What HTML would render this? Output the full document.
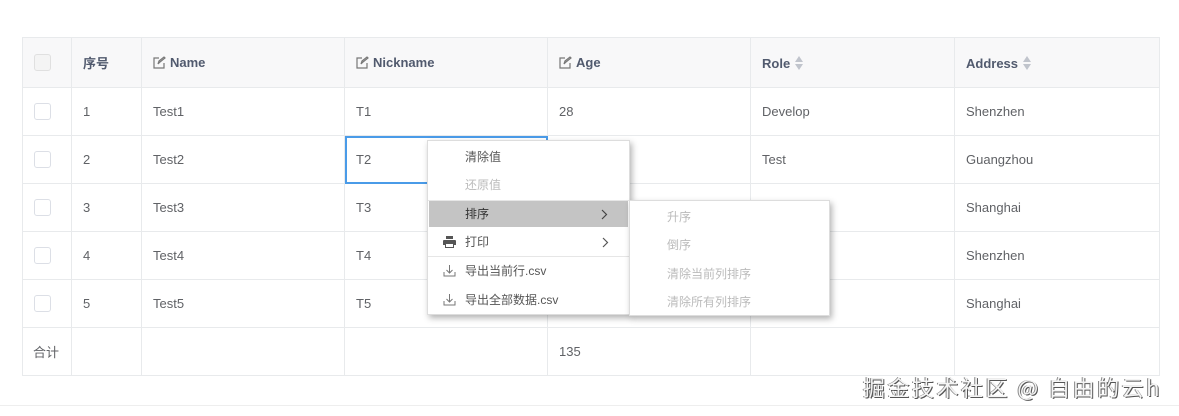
<!DOCTYPE html>
<html><head><meta charset="utf-8"><style>
*{margin:0;padding:0;box-sizing:border-box}
body{width:1179px;height:416px;background:#fff;font-family:"Liberation Sans","Noto Sans CJK SC",sans-serif;font-size:13px;color:#606266;position:relative;overflow:hidden}
table{position:absolute;left:22px;top:37px;border-collapse:collapse;table-layout:fixed;width:1138px}
td,th{border:1px solid #e8eaec;height:48px;padding:0 0 0 11px;text-align:left;font-weight:normal;white-space:nowrap}
th{background:#f8f8f9;height:50px;font-weight:bold;color:#515a6e}
.cb{display:inline-block;width:17px;height:17px;border:1px solid #dcdfe6;border-radius:3px;background:#fff;vertical-align:middle}
th .cb{border-color:#e0e0e0;background:#f4f4f4}
.ed{display:inline-block;vertical-align:-2px;margin-right:4px}
.srt{display:inline-block;vertical-align:-3px;margin-left:4px}
.sel{outline:2px solid #4a9be8;outline-offset:-2px}
.menu{position:absolute;background:#fff;box-shadow:2px 3px 6px rgba(0,0,0,.3);border:1px solid #ddd;font-size:12px}
.it{position:absolute;left:0;right:0;height:26px;line-height:26px;padding-left:37px;color:#555}
.dis{color:#bbb}
.hl{background:#c4c4c4;color:#333}
.arr{position:absolute;right:20px;top:8px}
.sep{position:absolute;left:0;right:0;height:1px;background:#e6e6e6}
.ic{position:absolute;left:15px;top:7px}
.wm{position:absolute;left:863px;top:371px;font-size:22px;color:#f4f4f4;text-shadow:1px 1px 0 #555,-1px 0 0 #888;letter-spacing:2.5px;font-family:"Noto Sans CJK SC",sans-serif;white-space:nowrap}
</style></head><body>
<table>
<colgroup><col style="width:49px"><col style="width:70px"><col style="width:203px"><col style="width:203px"><col style="width:203px"><col style="width:204px"><col style="width:205px"></colgroup>
<tr><th><span class="cb"></span></th><th>序号</th>
<th><svg class="ed" width="13" height="13" viewBox="0 0 13 13"><path d="M11 7v5H1V2h5M5 8l1-3 5-4 1 1-5 4z" fill="none" stroke="#777" stroke-width="1.2"/></svg>Name</th>
<th><svg class="ed" width="13" height="13" viewBox="0 0 13 13"><path d="M11 7v5H1V2h5M5 8l1-3 5-4 1 1-5 4z" fill="none" stroke="#777" stroke-width="1.2"/></svg>Nickname</th>
<th><svg class="ed" width="13" height="13" viewBox="0 0 13 13"><path d="M11 7v5H1V2h5M5 8l1-3 5-4 1 1-5 4z" fill="none" stroke="#777" stroke-width="1.2"/></svg>Age</th>
<th>Role<svg class="srt" width="10" height="16" viewBox="0 0 10 16"><path d="M5 1L9 7H1zM5 15L9 9H1z" fill="#c0c4cc"/></svg></th>
<th>Address<svg class="srt" width="10" height="16" viewBox="0 0 10 16"><path d="M5 1L9 7H1zM5 15L9 9H1z" fill="#c0c4cc"/></svg></th></tr>
<tr><td><span class="cb"></span></td><td>1</td><td>Test1</td><td>T1</td><td>28</td><td>Develop</td><td>Shenzhen</td></tr>
<tr><td><span class="cb"></span></td><td>2</td><td>Test2</td><td class="sel">T2</td><td></td><td>Test</td><td>Guangzhou</td></tr>
<tr><td><span class="cb"></span></td><td>3</td><td>Test3</td><td>T3</td><td></td><td></td><td>Shanghai</td></tr>
<tr><td><span class="cb"></span></td><td>4</td><td>Test4</td><td>T4</td><td></td><td></td><td>Shenzhen</td></tr>
<tr><td><span class="cb"></span></td><td>5</td><td>Test5</td><td>T5</td><td></td><td></td><td>Shanghai</td></tr>
<tr><td style="padding-left:10px">合计</td><td></td><td></td><td></td><td>135</td><td></td><td></td></tr>
</table>
<div style="position:absolute;left:0;right:0;top:405px;height:1px;background:#eee"></div>

<div class="menu" style="left:427px;top:140px;width:203px;height:175px">
<div class="it" style="top:3px">清除值</div>
<div class="it dis" style="top:31px">还原值</div>
<div class="sep" style="top:59px"></div>
<div class="it hl" style="top:60px;left:1px;right:1px;padding-left:36px">排序<svg class="arr" width="7" height="11" viewBox="0 0 7 11"><path d="M1 1l4.5 4.5L1 10" fill="none" stroke="#444" stroke-width="1.2"/></svg></div>
<div class="it" style="top:88px"><svg class="ic" width="13" height="12" viewBox="0 0 13 12"><path d="M3 0h7v3H3zM1 4h11a1 1 0 011 1v4h-2v3H2V9H0V5a1 1 0 011-1zM3 8v3h7V8z" fill="#555"/></svg>打印<svg class="arr" width="7" height="11" viewBox="0 0 7 11"><path d="M1 1l4.5 4.5L1 10" fill="none" stroke="#555" stroke-width="1.2"/></svg></div>
<div class="sep" style="top:115px"></div>
<div class="it" style="top:117px"><svg class="ic" width="13" height="12" viewBox="0 0 13 12"><path d="M6.5 0v8M3.5 5l3 3 3-3M1 7v4h11V7" fill="none" stroke="#777" stroke-width="1"/></svg>导出当前行.csv</div>
<div class="it" style="top:146px"><svg class="ic" width="13" height="12" viewBox="0 0 13 12"><path d="M6.5 0v8M3.5 5l3 3 3-3M1 7v4h11V7" fill="none" stroke="#777" stroke-width="1"/></svg>导出全部数据.csv</div>
</div>
<div class="menu" style="left:629px;top:200px;width:201px;height:116px">
<div class="it dis" style="top:3px">升序</div>
<div class="it dis" style="top:31px">倒序</div>
<div class="it dis" style="top:60px">清除当前列排序</div>
<div class="it dis" style="top:88px">清除所有列排序</div>
</div>
<div class="wm">掘金技术社区 @ 自由的云h</div>
</body></html>
